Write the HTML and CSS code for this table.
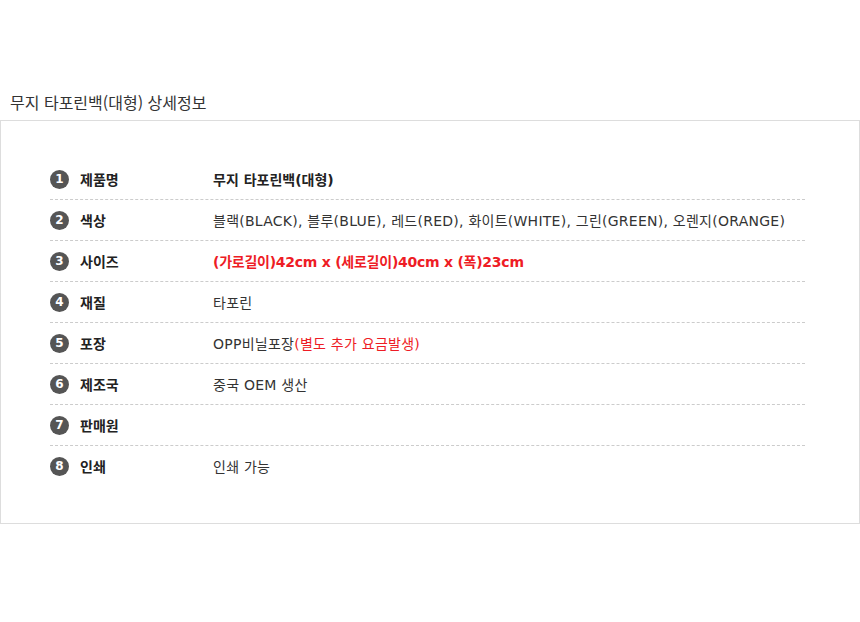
FILE: index.html
```html
<!DOCTYPE html>
<html lang="ko">
<head>
<meta charset="utf-8">
<link rel="stylesheet" href="styles.css">
</head>
<body>
<div class="page">
  <h2 class="title">무지 타포린백(대형) 상세정보</h2>
  <div class="box">
    <ul class="spec">
      <li class="row"><span class="num">1</span><span class="label">제품명</span><span class="value strong">무지 타포린백(대형)</span></li>
      <li class="row"><span class="num">2</span><span class="label">색상</span><span class="value">블랙(BLACK), 블루(BLUE), 레드(RED), 화이트(WHITE), 그린(GREEN), 오렌지(ORANGE)</span></li>
      <li class="row"><span class="num">3</span><span class="label">사이즈</span><span class="value strong red tight">(가로길이)42cm x (세로길이)40cm x (폭)23cm</span></li>
      <li class="row"><span class="num">4</span><span class="label">재질</span><span class="value">타포린</span></li>
      <li class="row"><span class="num">5</span><span class="label">포장</span><span class="value">OPP비닐포장<span class="red">(별도 추가 요금발생)</span></span></li>
      <li class="row"><span class="num">6</span><span class="label">제조국</span><span class="value">중국 OEM 생산</span></li>
      <li class="row"><span class="num">7</span><span class="label">판매원</span><span class="value"></span></li>
      <li class="row"><span class="num">8</span><span class="label">인쇄</span><span class="value">인쇄 가능</span></li>
    </ul>
  </div>
</div>
</body>
</html>
```

FILE: styles.css
```css
* { box-sizing: border-box; }
html, body { margin: 0; padding: 0; background: #fff; }
body {
  font-family: "Noto Sans CJK KR", "Noto Sans", sans-serif;
  color: #333;
}
.page { padding-top: 92px; }
.title {
  margin: 0 0 8px 10px;
  font-size: 16px;
  font-weight: 400;
  line-height: 20px;
  color: #333;
}
.box {
  border: 1px solid #ddd;
  width: 860px;
  height: 404px;
  padding: 38px 54px 0 49px;
}
.spec { list-style: none; margin: 0; padding: 0; }
.row {
  display: flex;
  align-items: center;
  height: 41px;
  border-bottom: 1px dashed #ccc;
}
.row:last-child { border-bottom: none; height: 40px; }
.num {
  width: 19px;
  height: 19px;
  border-radius: 50%;
  background: #555;
  color: #fff;
  font-family: "DejaVu Sans", sans-serif;
  font-size: 12px;
  font-weight: 700;
  line-height: 19px;
  text-align: center;
  flex: none;
}
.label {
  margin-left: 11px;
  width: 133px;
  flex: none;
  font-size: 14px;
  font-weight: 700;
  color: #222;
}
.value {
  font-family: "DejaVu Sans", "Noto Sans CJK KR", sans-serif;
  font-size: 14px;
  letter-spacing: 0.25px;
  color: #333;
}
.strong { font-weight: 700; color: #222; letter-spacing: 0; }
.tight { letter-spacing: -0.25px; }
.red { color: #ee1c25; }
.value.red { color: #ee1c25; }
```
